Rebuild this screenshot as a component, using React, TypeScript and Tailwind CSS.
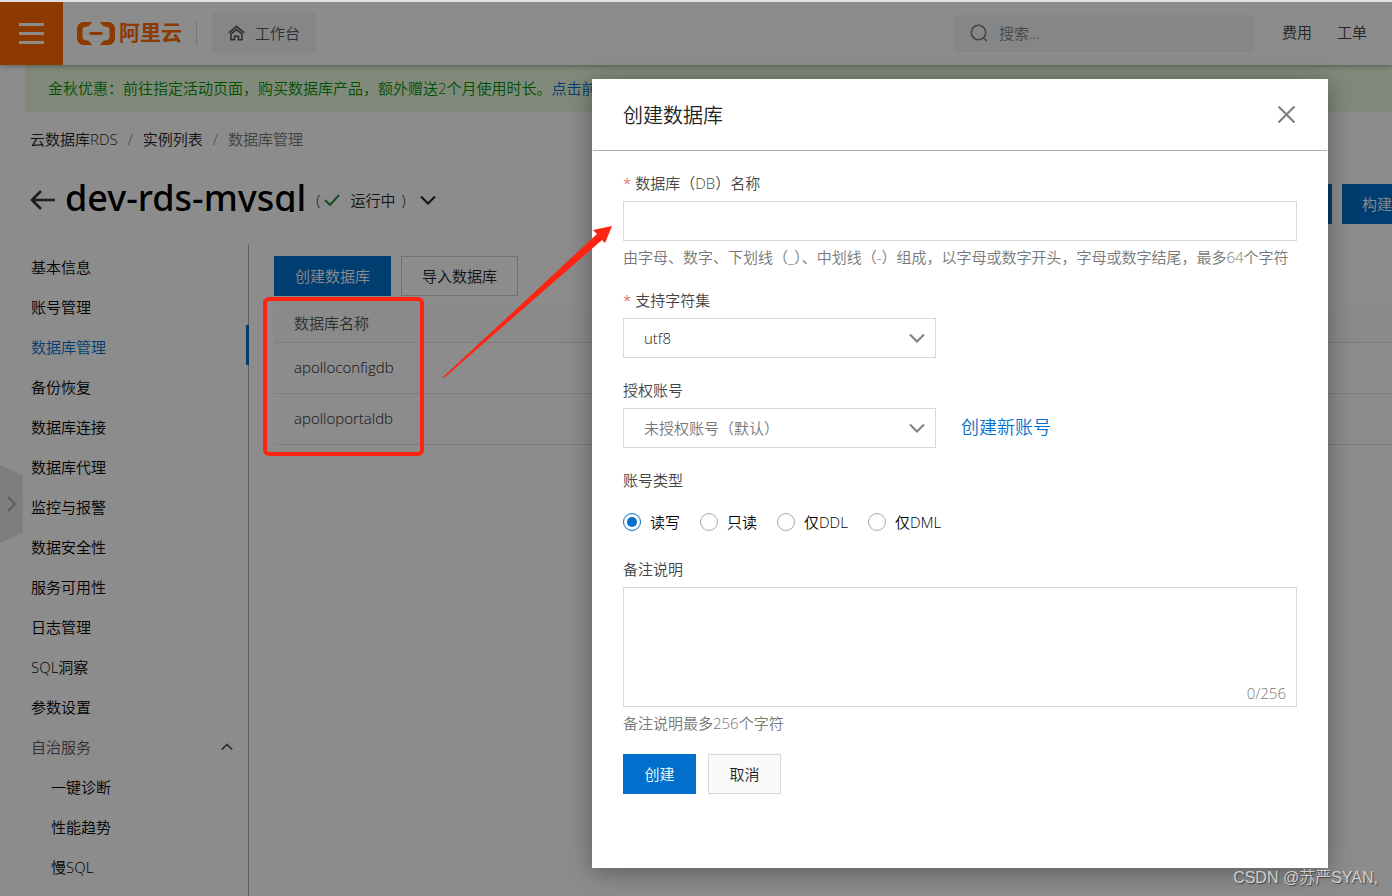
import React, { useState } from "react";

const NAV_ITEMS = [
  "基本信息",
  "账号管理",
  "数据库管理",
  "备份恢复",
  "数据库连接",
  "数据库代理",
  "监控与报警",
  "数据安全性",
  "服务可用性",
  "日志管理",
  "SQL洞察",
  "参数设置",
];

const SUB_ITEMS = ["一键诊断", "性能趋势", "慢SQL"];

const DATABASES = ["apolloconfigdb", "apolloportaldb"];

const ACCOUNT_TYPES = ["读写", "只读", "仅DDL", "仅DML"];

const Chevron: React.FC<{ className?: string; d?: string }> = ({
  className = "",
  d = "M1 1.5 8 8.5 15 1.5",
}) => (
  <svg viewBox="0 0 16 10" fill="none" stroke="currentColor" strokeWidth="2" className={className} aria-hidden="true">
    <path d={d} />
  </svg>
);

const Header = () => (
  <header className="relative z-10 flex shrink-0 bg-white shadow-[0_1px_5px_rgba(0,0,0,0.35)]">
    <button
      type="button"
      aria-label="菜单"
      className="flex h-[63px] w-[63px] shrink-0 flex-col items-center justify-center gap-1.5 bg-[#ff6a00]"
    >
      <span className="h-[3px] w-[25px] bg-white" />
      <span className="h-[3px] w-[25px] bg-white" />
      <span className="h-[3px] w-[25px] bg-white" />
    </button>

    <div className="flex flex-1 items-center pb-px">
      <a href="#" className="ml-3.5 flex shrink-0 items-center gap-1 text-[#ff6a00]">
        <svg width="38" height="23" viewBox="0 0 38 23" fill="currentColor" aria-hidden="true">
          <path d="M15 0H6.500A6.500 6.500 0 0 0 0 6.500v10A6.500 6.500 0 0 0 6.500 23H15l-3-4-4.500-1a2.500 2.500 0 0 1-2-2.400V7.400a2.500 2.500 0 0 1 2-2.400L12 4z" />
          <path d="M23 0h8.500A6.500 6.500 0 0 1 38 6.500v10a6.500 6.500 0 0 1-6.500 6.500H23l3-4 4.500-1a2.500 2.500 0 0 0 2-2.400V7.400a2.500 2.500 0 0 0-2-2.400L26 4z" />
          <path d="M12.500 10h13v3h-13z" />
        </svg>
        <span className="pb-0.5 text-[21px] leading-6 font-bold">阿里云</span>
      </a>

      <span className="ml-3.5 h-6 w-px bg-[#d8d8d8]" />

      <a href="#" className="ml-[15px] flex h-10 shrink-0 items-center gap-2.5 rounded-sm bg-[#f3f5f8] px-4 text-[#555]">
        <svg width="17" height="16" viewBox="0 0 17 16" fill="none" stroke="currentColor" strokeWidth="1.6" aria-hidden="true">
          <path d="M.8 7.800 8.500 1.300l7.700 6.500" />
          <path d="M3 9v5.700h3.500v-3.400h4v3.400H14V9L8.500 4.600z" />
        </svg>
        工作台
      </a>

      <label className="ml-auto flex h-[37px] w-[300px] items-center gap-[11px] bg-[#f3f5f8] px-4 text-[#808080]">
        <svg width="18" height="18" viewBox="0 0 18 18" fill="none" stroke="currentColor" strokeWidth="1.6" className="shrink-0" aria-hidden="true">
          <circle cx="8.500" cy="8.500" r="7.200" />
          <path d="m13.500 13.500 3 3.500" />
        </svg>
        <input type="text" aria-label="搜索" placeholder="搜索..." className="w-full bg-transparent outline-none placeholder:text-[#808080]" />
      </label>
      <a href="#" className="ml-7 shrink-0 pb-0.5 text-[#444]">费用</a>
      <a href="#" className="mr-[25px] ml-[25px] shrink-0 pb-0.5 text-[#444]">工单</a>
    </div>
  </header>
);

const Sidebar = () => (
  <nav className="w-[249px] shrink-0 border-r border-[#b0b0b0] pt-px text-black">
    {NAV_ITEMS.map((item) => (
      <a
        key={item}
        href="#"
        className={
          item === "数据库管理"
            ? "-mr-px flex h-10 items-center border-r-[3px] border-[#0070cc] pt-1 pl-[31px] text-[#0070cc]"
            : "flex h-10 items-center pt-1 pl-[31px]"
        }
      >
        {item}
      </a>
    ))}
    <button type="button" className="flex h-10 w-full items-center justify-between pt-1 pr-[15px] pl-[31px] text-[#555]">
      自治服务
      <Chevron className="h-2 w-3" d="M1 8.500 8 1.500 15 8.500" />
    </button>
    {SUB_ITEMS.map((item) => (
      <a key={item} href="#" className="flex h-10 items-center pt-1 pl-[51px]">
        {item}
      </a>
    ))}
  </nav>
);

const DatabaseList = () => (
  <main className="min-w-0 flex-1 pt-3 pl-[25px]">
    <div className="flex gap-2.5">
      <button type="button" className="h-10 bg-[#0070cc] px-[21px] text-white">创建数据库</button>
      <button type="button" className="h-10 border border-[#d0d0d0] px-5 text-[#222]">导入数据库</button>
    </div>
    <table className="mt-[9px] w-full text-left">
      <thead>
        <tr className="h-[37px] border-b border-[#e5e5e5] bg-[#fcfcfc] text-[#555]">
          <th className="px-5 font-[350]">数据库名称</th>
        </tr>
      </thead>
      <tbody className="text-[#222]">
        {DATABASES.map((name) => (
          <tr key={name} className="h-[51px] border-b border-[#e5e5e5]">
            <td className="px-5 pb-0.5">{name}</td>
          </tr>
        ))}
      </tbody>
    </table>
  </main>
);

const SelectBox: React.FC<{ id: string; options: string[]; className: string }> = ({ id, options, className }) => (
  <div className="relative w-[313px]">
    <select id={id} className={`h-10 w-full appearance-none border border-[#d9d9d9] bg-white pl-5 ${className}`}>
      {options.map((option) => (
        <option key={option}>{option}</option>
      ))}
    </select>
    <Chevron className="pointer-events-none absolute top-[15px] right-[11px] h-2.5 w-4 text-[#808080]" />
  </div>
);

const CreateDatabaseDialog = () => {
  const [name, setName] = useState("");
  const [accountType, setAccountType] = useState("读写");
  const [remark, setRemark] = useState("");

  return (
    <section
      role="dialog"
      aria-labelledby="dialogTitle"
      className="w-[736px] bg-white text-[#444] shadow-[0_4px_24px_rgba(0,0,0,0.35)]"
    >
      <div className="mx-px flex h-[72px] items-center justify-between border-b border-[#b5aea5] px-[30px]">
        <h2 id="dialogTitle" className="pt-0.5 text-xl text-[#222]">创建数据库</h2>
        <button type="button" aria-label="关闭" className="text-[#808080]">
          <svg width="20" height="20" viewBox="0 0 20 20" fill="none" stroke="currentColor" strokeWidth="2.200">
            <path d="m1.500 1.500 16 16M17.500 1.500l-16 16" />
          </svg>
        </button>
      </div>

      <form className="px-[31px] pt-5 pb-[74px] leading-6">
        <label htmlFor="dbName" className="mb-1.5 block">
          <span className="mr-1 text-[#d93026]">*</span>数据库（DB）名称
        </label>
        <input
          id="dbName"
          type="text"
          value={name}
          onChange={(event) => setName(event.target.value)}
          className="block h-10 w-full border border-[#d9d9d9] px-3 outline-none"
        />
        <p className="mt-1 whitespace-nowrap text-[#777]">
          由字母、数字、下划线（_）、中划线（-）组成，以字母或数字开头，字母或数字结尾，最多64个字符
        </p>

        <label htmlFor="charset" className="mt-[19px] mb-1.5 block">
          <span className="mr-1 text-[#d93026]">*</span>支持字符集
        </label>
        <SelectBox id="charset" options={["utf8", "gbk", "latin1", "utf8mb4"]} className="text-[#222]" />

        <label htmlFor="account" className="mt-5 mb-1.5 block">授权账号</label>
        <div className="flex items-center gap-[25px]">
          <SelectBox id="account" options={["未授权账号（默认）"]} className="text-[#777]" />
          <a href="#" className="pb-0.5 text-lg text-[#0070cc]">创建新账号</a>
        </div>

        <fieldset className="mt-5">
          <legend>账号类型</legend>
          <div className="mt-[18px] flex gap-5 text-black">
            {ACCOUNT_TYPES.map((type) => (
              <label key={type} className="flex items-center gap-[9px]">
                <input
                  type="radio"
                  name="accountType"
                  checked={accountType === type}
                  onChange={() => setAccountType(type)}
                  className="size-[18px] appearance-none rounded-full border border-[#aaa] bg-white bg-clip-content p-[3px] checked:border-[#0070cc] checked:bg-[#0070cc]"
                />
                {type}
              </label>
            ))}
          </div>
        </fieldset>

        <label htmlFor="remark" className="mt-[23px] mb-1.5 block">备注说明</label>
        <div className="relative">
          <textarea
            id="remark"
            maxLength={256}
            value={remark}
            onChange={(event) => setRemark(event.target.value)}
            className="block h-[120px] w-full resize-none border border-[#d9d9d9] p-3 outline-none"
          />
          <span className="absolute right-[11px] bottom-0.5 text-[#777]">{remark.length}/256</span>
        </div>
        <p className="mt-1 text-[#777]">备注说明最多256个字符</p>

        <div className="mt-[19px] flex gap-3">
          <button type="submit" className="h-10 w-[73px] bg-[#0070cc] text-white">创建</button>
          <button type="button" className="h-10 w-[73px] border border-[#d9d9d9] bg-[#fafafa] text-[#222]">取消</button>
        </div>
      </form>
    </section>
  );
};

export default function App() {
  return (
    <div className="relative flex h-screen flex-col overflow-hidden border-t-2 border-[#dfe1e3] bg-white font-['Open_Sans','Noto_Sans_CJK_SC',sans-serif] text-[15px] leading-6 font-[350]">
      <Header />

      <div className="ml-[25px] flex h-[47px] shrink-0 items-center bg-[#ebf9df] pb-0.5 pl-[23px] text-[#009400]">
        <p className="whitespace-nowrap">
          金秋优惠：前往指定活动页面，购买数据库产品，额外赠送2个月使用时长。
          <a href="#" className="text-[#0070cc]">点击前往</a>
        </p>
      </div>

      <nav className="mt-[15px] flex shrink-0 gap-2.5 pl-[30px] text-[#777]">
        <a href="#" className="text-[#222]">云数据库RDS</a>
        <span>/</span>
        <a href="#" className="text-[#222]">实例列表</a>
        <span>/</span>
        <span>数据库管理</span>
      </nav>

      <div className="mt-[33px] mb-5 flex h-10 shrink-0 items-center pl-[30px]">
        <svg width="25" height="20" viewBox="0 0 25 20" fill="none" stroke="#333" strokeWidth="2.600" className="-mt-2 shrink-0" aria-hidden="true">
          <path d="M11 1 2 10l9 9M2 10h23" />
        </svg>
        <h1 className="ml-2.5 h-7 self-start overflow-hidden font-['Noto_Sans',sans-serif] text-4xl leading-7 font-medium text-black">dev-rds-mysql</h1>
        <div className="-mt-2 ml-2.5 flex items-center text-[#222]">
          <span>(</span>
          <svg width="16" height="12" viewBox="0 0 16 12" fill="none" stroke="#1e8e3e" strokeWidth="2" className="mx-1" aria-hidden="true">
            <path d="m1 6 5 5L15 1" />
          </svg>
          <span className="ml-1.5">运行中</span>
          <span className="ml-1.5">)</span>
          <Chevron className="ml-3.5 h-2.5 w-4" />
        </div>
        <div className="ml-auto flex gap-2.5 text-white">
          <button type="button" className="h-10 bg-[#0070cc] px-5">登录数据库</button>
          <button type="button" className="h-10 bg-[#0070cc] pl-5">构建</button>
        </div>
      </div>

      <div className="flex min-h-0 flex-1">
        <Sidebar />
        <DatabaseList />
      </div>

      {/* 侧边栏展开按钮 */}
      <button type="button" aria-label="展开" className="absolute top-[463px] left-0">
        <svg width="23" height="78" viewBox="0 0 23 78" fill="none">
          <path d="M0 0 23 10v58L0 78z" fill="#e6e6e6" />
          <path d="m8 32 7 7-7 7" stroke="#aaa" strokeWidth="2" />
        </svg>
      </button>

      {/* 遮罩和弹窗 */}
      <div className="absolute inset-0 z-20 flex items-start justify-end bg-black/45 pt-[77px] pr-16">
        <CreateDatabaseDialog />
      </div>

      {/* 标注 */}
      <div className="absolute top-[295px] left-[263px] z-30 h-[159px] w-[161px] rounded-md border-4 border-[#ff2314]" />
      <svg width="170" height="153" viewBox="0 0 170 153" className="absolute top-[224px] left-[443px] z-30" fill="#ff2314" aria-hidden="true">
        <path d="M0 151 154 8l-4-4 19-4-7 17-3-3L1 152z" />
      </svg>

      <p className="absolute right-3.5 bottom-1.5 z-30 font-['Liberation_Sans','Noto_Sans_CJK_SC',sans-serif] text-base leading-6 text-[#d0d0d0] [text-shadow:1px_1px_1px_#444]">
        CSDN @苏严SYAN,
      </p>
    </div>
  );
}
